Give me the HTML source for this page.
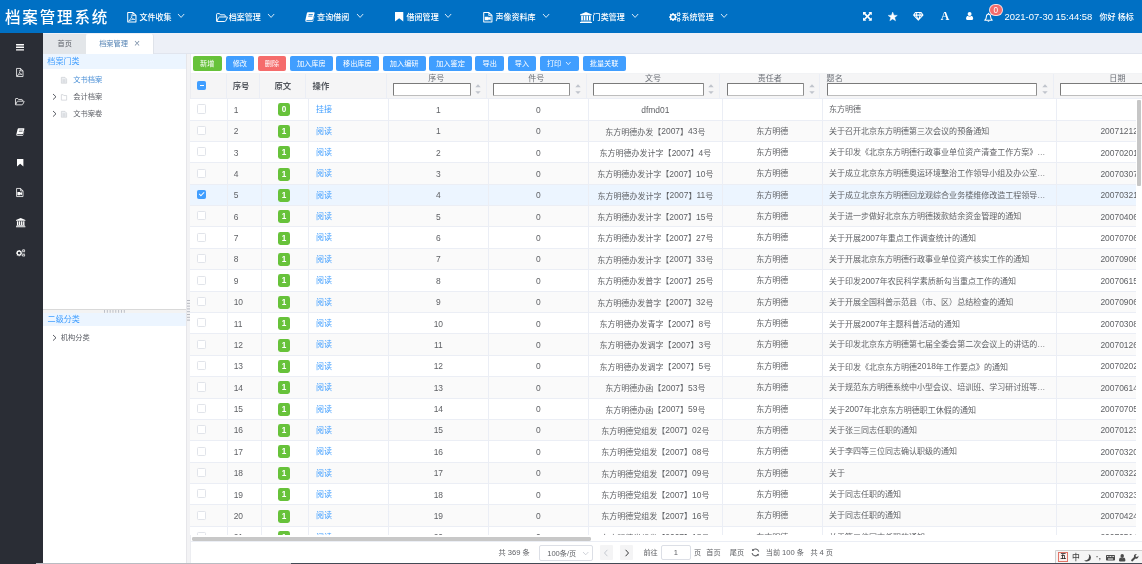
<!DOCTYPE html><html lang="zh-CN"><head><meta charset="utf-8"><title>档案管理系统</title><style>*{box-sizing:border-box;margin:0;padding:0}
html,body{width:1142px;height:564px;overflow:hidden;background:#fff}
body{position:relative;font-family:"Liberation Sans","Noto Sans CJK SC",sans-serif;font-size:8.02px;color:#606266;-webkit-font-smoothing:antialiased}
#w{position:absolute;left:0;top:0;width:1142px;height:564px;will-change:transform}
.a{font-size:1.054em}
.ic{position:absolute;display:block;overflow:visible}
#hdr{position:absolute;left:0;top:0;width:1142px;height:32.8px;background:#0070c4;color:#fff}
#title{position:absolute;left:5px;top:0;height:33px;line-height:35.6px;font-size:15.5px;letter-spacing:1.85px;white-space:nowrap;font-weight:500}
.nt{position:absolute;top:0;height:33px;line-height:35.8px;font-size:8.05px;font-weight:500;white-space:nowrap}
#fontA{position:absolute;left:939.4px;top:9.7px;width:11.4px;text-align:center;font-family:"Liberation Serif",serif;font-weight:700;font-size:11.8px;line-height:13px}
#badge{position:absolute;left:989.2px;top:4.3px;width:13.4px;height:11.3px;border-radius:6px;background:#f56c6c;border:.6px solid rgba(255,255,255,.75);font-size:8.2px;line-height:12px;text-align:center;color:#fff;font-weight:400}
#clock{position:absolute;left:1004.6px;top:0;height:33px;line-height:33.8px;font-size:9.46px;white-space:nowrap}
#hello{position:absolute;left:1099.4px;top:0;height:33px;line-height:36px;font-size:8.05px;font-weight:500;white-space:nowrap}
#side{position:absolute;left:0;top:32.8px;width:43.2px;height:531.2px;background:#2a2d35;color:#fff}
#tabs{position:absolute;left:43.2px;top:32.8px;width:1098.8px;height:20.8px;background:#edf0f7;border-bottom:1px solid #e1e5ee}
.tab{position:absolute;top:1.2px;height:19.6px;line-height:20px;font-size:7.2px;white-space:nowrap}
.t1{left:0;width:42.6px;background:#e3e6e9;color:#5b5e66;padding-left:14.4px}
.t2{left:42.6px;width:68.2px;background:#fff;color:#5583b4;padding-left:13.4px;border-radius:2.4px 2.4px 0 0;border-right:1px solid #dfe3ea}
.t2 .x{position:absolute;left:48.3px;top:-.2px;font-size:10.4px;color:#7f93ab;font-family:"Liberation Sans",sans-serif}
#left{position:absolute;left:43.2px;top:53.6px;width:143px;height:510.4px;background:#fff;overflow:hidden}
.sec{position:absolute;left:0;width:143px;height:14.2px;line-height:15.4px;background:#ecf5ff;color:#409eff;font-size:8.1px;padding-left:4.1px;white-space:nowrap}
.tr{position:absolute;left:0;width:143px;height:16px;line-height:16.4px;font-size:7.25px;color:#5c5f66;white-space:nowrap}
.tr span{position:absolute;top:0}
.tr.bl{color:#4a8fd6}
#hsplit{position:absolute;left:0;top:255.3px;width:143px;height:4.2px;background:#f3f3f3;border-top:1px solid #d9d9d9}
#hsplit i{position:absolute;left:61px;top:.4px;width:20px;height:2.6px;background:repeating-linear-gradient(90deg,#bdbdbd 0,#bdbdbd .8px,transparent .8px,transparent 2.66px)}
#vsplit{position:absolute;left:186px;top:53.6px;width:4.6px;height:510.4px;background:#f3f3f5;border-left:1px solid #e6e6ea;border-right:1px solid #ecedf1}
#vsplit i{position:absolute;left:0;top:246.2px;width:3.2px;height:20px;background:repeating-linear-gradient(180deg,#b4b7be 0,#b4b7be .9px,transparent .9px,transparent 2.66px)}
.btn{position:absolute;top:56px;height:15px;line-height:15.4px;border-radius:2px;background:#409eff;color:#fff;font-size:7.2px;text-align:center;white-space:nowrap}
.btn.g{background:#67c23a}.btn.r{background:#f56c6c}
#thead{position:absolute;left:190.6px;top:72.6px;width:951.4px;height:26.1px;background:#f5f5f6;border-top:1px solid #f2f3f5;border-bottom:1px solid #ebeef5}
.hc{position:absolute;top:0;height:26px;border-left:1px solid #ebeef5}
.hb{position:absolute;top:0;height:24.2px;line-height:25px;font-size:8.35px;font-weight:700;color:#54585f;white-space:nowrap}
.hl{position:absolute;top:.3px;height:10px;line-height:10.6px;font-size:8.05px;color:#6b6f76;white-space:nowrap}
.inp{position:absolute;top:9.5px;height:13.3px;background:#fff;border:1.1px solid;border-color:#7a7a7a #8e8e8e #bdbdbd #7a7a7a;border-radius:1px}
.su,.sd{position:absolute;width:0;height:0;border:2.9px solid transparent}
.su{top:11px;border-bottom:3.1px solid #c0c4cc;border-top-width:0}
.sd{top:17.5px;border-top:3.1px solid #c0c4cc;border-bottom-width:0}
.cb{width:9.1px;height:9.1px;border:1px solid #e1e4ea;border-radius:1.4px;background:#fff;position:relative;margin:0 auto}
.cb.ind,.cb.on{background:#409eff;border-color:#409eff}
.cb.ind{position:absolute;margin:0}
.cb.ind i{position:absolute;left:1.5px;top:2.9px;width:4.1px;height:1.3px;background:#fff}
.cb.on:after{content:"";position:absolute;left:2.3px;top:.4px;width:2.1px;height:4.4px;border:solid #fff;border-width:0 1px 1px 0;transform:rotate(45deg)}
#tbody{position:absolute;left:190.1px;top:98.7px;width:946px;height:436.6px;overflow:hidden}
.row{position:absolute;left:0;width:992px;height:21.4px;border-bottom:1px solid #ebeef5;background:#fff}
.row.s{background:#fafafa}
.row.cur{background:#ecf5ff}
.td{position:absolute;top:0;height:20.4px;line-height:22.6px;border-left:1px solid #ebeef5;text-align:center;font-size:8.02px;color:#606266;white-space:nowrap;overflow:hidden}
.td:first-child,.hc:first-child{border-left-color:transparent}
.td.l{text-align:left;padding-left:5.9px}
.td.lk{color:#409eff;padding-left:6.9px}
.td .a,#pg .a{position:relative;top:-.45px}
.td .cb{position:absolute;left:6.1px;top:5.3px;margin:0}
.el{width:221px;overflow:hidden;text-overflow:ellipsis;white-space:nowrap}
.tag{position:absolute;left:50%;margin-left:-7.5px;top:4.2px;width:12.8px;height:13px;line-height:13.6px;border-radius:2.4px;background:#67c23a;color:#fff;font-size:8.2px;font-weight:700;text-align:center}
#vtrack{position:absolute;left:1136.1px;top:98.7px;width:5.9px;height:436.6px;background:#fff}
#vtrack i{position:absolute;left:.8px;top:1.8px;width:4.6px;height:85.8px;background:#c6c6c6;border-radius:1px}
#htrack{position:absolute;left:190.6px;top:535.3px;width:951.4px;height:6.6px;background:#fff;border-bottom:1px solid #ebeef5}
#htrack i{position:absolute;left:1px;top:1.5px;width:399.4px;height:4.4px;background:#c8c8c8;border-radius:1.4px}
#pg{position:absolute;left:190.6px;top:542.3px;width:951.4px;height:21px;background:#fff;font-size:7.2px;color:#606266}
.pt{position:absolute;top:0;height:20.4px;line-height:22.4px;white-space:nowrap}
.psel{position:absolute;top:3.1px;width:53.4px;height:15.3px;border:1px solid #dcdfe6;border-radius:2px;line-height:15.4px;padding-left:6.9px;white-space:nowrap}
.pbtn{position:absolute;top:2.9px;width:13.4px;height:15.2px;background:#f4f4f5;border-radius:1.2px}
.pinp{position:absolute;top:3.1px;width:29.5px;height:15.1px;border:1px solid #dcdfe6;border-radius:2px;line-height:13.8px;text-align:center}
#ime{position:absolute;left:1054.7px;top:550.2px;width:87.3px;height:12.8px;background:#f5f5f5;border:1px solid #cfcfcf;border-right:0;border-bottom:0;border-radius:1.5px 0 0 0;color:#4a4a4a}
#ime .wu{position:absolute;left:2.7px;top:1.1px;width:9.8px;height:9.8px;border:1.1px solid #e27468;border-top-width:1.8px;background:#fdeeec;color:#222;font-size:6px;line-height:7.8px;text-align:center;font-weight:700}
#ime .zh{position:absolute;left:16.2px;top:1.5px;font-size:7.8px;line-height:10px;font-weight:500;color:#444}
#ime .pun{position:absolute;left:40.4px;top:1.2px;font-size:7.6px;line-height:9px;font-weight:700;color:#555;letter-spacing:.2px}
#bl1{position:absolute;left:36px;top:563px;width:255px;height:1px;background:#b9bcc2}
#bl2{position:absolute;left:291px;top:563px;width:851px;height:1px;background:#434a55}
</style></head><body><div id="w">
<div id="hdr">
<div id="title">档案管理系统</div>
<svg class="ic" style="left:127.10px;top:11.90px;width:9.70px;height:10.50px;color:#fff;" viewBox="0 0 12 14" fill="#fff" preserveAspectRatio="none"><path d="M.9 .7H7.3L11.1 4.5V13.3H.9Z M7.3 .7V4.5H11.1" fill="none" stroke="currentColor" stroke-width="1.25" stroke-linejoin="round"/><path d="M5.2 3.6C6.4 3.4 6.3 5.2 5.6 7C4.8 9 3.6 10.8 2.4 11.7 M5.4 6.6C6.2 8.4 7.6 9.6 9.6 9.9C7.2 9.7 4.6 10.3 2.4 11.6" fill="none" stroke="currentColor" stroke-width="1" stroke-linejoin="round" stroke-linecap="round"/></svg>
<div class="nt" style="left:139.4px">文件收集</div>
<svg class="ic" style="left:177.30px;top:13.40px;width:8.20px;height:5.40px" viewBox="-1 -1 8.2 5.4"><path d="M0 0 L3.1 3.4 L6.2 0" fill="none" stroke="#fff" stroke-width="0.85"/></svg>
<svg class="ic" style="left:215.90px;top:12.50px;width:12.00px;height:9.20px;color:#fff;" viewBox="0 0 16 12" fill="#fff" preserveAspectRatio="none"><path d="M.8 10.6V1.7Q.8 .8 1.7 .8H4.7L5.9 2.4H11.3Q12.2 2.4 12.2 3.3V5" fill="none" stroke="currentColor" stroke-width="1.3" stroke-linejoin="round"/><path d="M1 11.1L3.5 5.9Q3.8 5.2 4.6 5.2H14.6Q15.6 5.2 15.1 6.1L12.9 10.3Q12.5 11.1 11.6 11.1Z" fill="none" stroke="currentColor" stroke-width="1.3" stroke-linejoin="round"/></svg>
<div class="nt" style="left:228.7px">档案管理</div>
<svg class="ic" style="left:266.70px;top:13.40px;width:8.20px;height:5.40px" viewBox="-1 -1 8.2 5.4"><path d="M0 0 L3.1 3.4 L6.2 0" fill="none" stroke="#fff" stroke-width="0.85"/></svg>
<svg class="ic" style="left:304.90px;top:12.00px;width:9.80px;height:9.90px;color:#fff;" viewBox="0 0 14 12" fill="#fff" preserveAspectRatio="none"><path d="M4.3 .3H12.9Q14 .3 13.7 1.4L11.5 8.6Q11.2 9.6 10.2 9.6H2.6Q1.9 9.6 1.8 10.1Q1.7 10.7 2.5 10.7H10.6Q11.4 10.7 11.7 9.9L13.2 5.2L13.6 5.6L11.9 10.8Q11.5 11.8 10.5 11.8H2.2Q.2 11.8 .5 9.9L2.6 1.9Q3 .3 4.3 .3Z M5.4 2.6L5.1 3.5H11L11.3 2.6Z M4.8 4.6L4.5 5.5H10.4L10.7 4.6Z"/></svg>
<div class="nt" style="left:317.1px">查询借阅</div>
<svg class="ic" style="left:355.60px;top:13.40px;width:8.20px;height:5.40px" viewBox="-1 -1 8.2 5.4"><path d="M0 0 L3.1 3.4 L6.2 0" fill="none" stroke="#fff" stroke-width="0.85"/></svg>
<svg class="ic" style="left:394.70px;top:12.40px;width:8.30px;height:9.60px;color:#fff;" viewBox="0 0 8 10" fill="#fff" preserveAspectRatio="none"><path d="M.2 0H7.8Q8 0 8 .3V10L4 6.4L0 10V.3Q0 0 .2 0Z"/></svg>
<div class="nt" style="left:406.5px">借阅管理</div>
<svg class="ic" style="left:444.40px;top:13.40px;width:8.20px;height:5.40px" viewBox="-1 -1 8.2 5.4"><path d="M0 0 L3.1 3.4 L6.2 0" fill="none" stroke="#fff" stroke-width="0.85"/></svg>
<svg class="ic" style="left:483.10px;top:11.90px;width:9.70px;height:10.50px;color:#fff;" viewBox="0 0 12 14" fill="#fff" preserveAspectRatio="none"><path d="M.9 .7H7.3L11.1 4.5V13.3H.9Z M7.3 .7V4.5H11.1" fill="none" stroke="currentColor" stroke-width="1.25" stroke-linejoin="round"/><path d="M2.7 6.3H6.5Q7 6.3 7 6.8V7.8L9.5 6.1V11.3L7 9.6V10.6Q7 11.1 6.5 11.1H2.7Q2.2 11.1 2.2 10.6V6.8Q2.2 6.3 2.7 6.3Z"/></svg>
<div class="nt" style="left:495.4px">声像资料库</div>
<svg class="ic" style="left:541.70px;top:13.40px;width:8.20px;height:5.40px" viewBox="-1 -1 8.2 5.4"><path d="M0 0 L3.1 3.4 L6.2 0" fill="none" stroke="#fff" stroke-width="0.85"/></svg>
<svg class="ic" style="left:580.00px;top:11.50px;width:11.90px;height:11.00px;color:#fff;" viewBox="0 0 16 15" fill="#fff" preserveAspectRatio="none"><path d="M8 0L16 3.3V4.4H0V3.3Z M1.6 5.2H3.9V11.4H1.6Z M5 5.2H7.3V11.4H5Z M8.6 5.2H10.9V11.4H8.6Z M12.1 5.2H14.4V11.4H12.1Z M1 11.9H15V13H1Z M0 13.5H16V15H0Z"/></svg>
<div class="nt" style="left:592.6px">门类管理</div>
<svg class="ic" style="left:630.50px;top:13.40px;width:8.20px;height:5.40px" viewBox="-1 -1 8.2 5.4"><path d="M0 0 L3.1 3.4 L6.2 0" fill="none" stroke="#fff" stroke-width="0.85"/></svg>
<svg class="ic" style="left:668.90px;top:12.20px;width:11.70px;height:9.80px;color:#fff;" viewBox="0 0 17 14" fill="#fff" preserveAspectRatio="none"><path fill-rule="evenodd" d="M11.51 6.30 L11.51 8.30 L10.27 8.37 L9.72 9.70 L10.55 10.64 L9.14 12.05 L8.20 11.22 L6.87 11.77 L6.80 13.01 L4.80 13.01 L4.73 11.77 L3.40 11.22 L2.46 12.05 L1.05 10.64 L1.88 9.70 L1.33 8.37 L0.09 8.30 L0.09 6.30 L1.33 6.23 L1.88 4.90 L1.05 3.96 L2.46 2.55 L3.40 3.38 L4.73 2.83 L4.80 1.59 L6.80 1.59 L6.87 2.83 L8.20 3.38 L9.14 2.55 L10.55 3.96 L9.72 4.90 L10.27 6.23Z M8.30 7.30 A2.5 2.5 0 1 0 3.30 7.30 A2.5 2.5 0 1 0 8.30 7.30Z"/><path fill-rule="evenodd" d="M16.92 2.61 L16.92 3.99 L16.19 4.01 L15.71 4.84 L16.05 5.49 L14.87 6.17 L14.48 5.55 L13.52 5.55 L13.13 6.17 L11.95 5.49 L12.29 4.84 L11.81 4.01 L11.08 3.99 L11.08 2.61 L11.81 2.59 L12.29 1.76 L11.95 1.11 L13.13 0.43 L13.52 1.05 L14.48 1.05 L14.87 0.43 L16.05 1.11 L15.71 1.76 L16.19 2.59Z M15.20 3.30 A1.2 1.2 0 1 0 12.80 3.30 A1.2 1.2 0 1 0 15.20 3.30Z"/><path fill-rule="evenodd" d="M16.92 10.21 L16.92 11.59 L16.19 11.61 L15.71 12.44 L16.05 13.09 L14.87 13.77 L14.48 13.15 L13.52 13.15 L13.13 13.77 L11.95 13.09 L12.29 12.44 L11.81 11.61 L11.08 11.59 L11.08 10.21 L11.81 10.19 L12.29 9.36 L11.95 8.71 L13.13 8.03 L13.52 8.65 L14.48 8.65 L14.87 8.03 L16.05 8.71 L15.71 9.36 L16.19 10.19Z M15.20 10.90 A1.2 1.2 0 1 0 12.80 10.90 A1.2 1.2 0 1 0 15.20 10.90Z"/></svg>
<div class="nt" style="left:681.5px">系统管理</div>
<svg class="ic" style="left:719.50px;top:13.40px;width:8.20px;height:5.40px" viewBox="-1 -1 8.2 5.4"><path d="M0 0 L3.1 3.4 L6.2 0" fill="none" stroke="#fff" stroke-width="0.85"/></svg>
<svg class="ic" style="left:862.90px;top:11.80px;width:8.80px;height:8.80px;color:#fff;" viewBox="0 0 12 12" fill="#fff" preserveAspectRatio="none"><path d="M0 0H4.6L3.1 1.5L6 4.4L8.9 1.5L7.4 0H12V4.6L10.5 3.1L7.6 6L10.5 8.9L12 7.4V12H7.4L8.9 10.5L6 7.6L3.1 10.5L4.6 12H0V7.4L1.5 8.9L4.4 6L1.5 3.1L0 4.6Z"/></svg>
<svg class="ic" style="left:887.70px;top:11.70px;width:9.40px;height:9.00px;color:#fff;" viewBox="0 0 12 11.5" fill="#fff" preserveAspectRatio="none"><polygon points="6.00,0.05 7.56,4.11 11.90,4.33 8.52,7.07 9.64,11.27 6.00,8.90 2.36,11.27 3.48,7.07 0.10,4.33 4.44,4.11" stroke="currentColor" stroke-width=".5" stroke-linejoin="round"/></svg>
<svg class="ic" style="left:913.40px;top:12.20px;width:10.60px;height:8.80px;color:#fff;" viewBox="0 0 16 12" fill="#fff" preserveAspectRatio="none"><path d="M3.6 .8H12.4L15.1 4.3L8 11.2L.9 4.3Z M.9 4.3H15.1 M5.9 .8L4.9 4.3L8 11L11.1 4.3L10.1 .8" fill="none" stroke="currentColor" stroke-width="1.45" stroke-linejoin="round"/></svg>
<div id="fontA">A</div>
<svg class="ic" style="left:965.60px;top:12.40px;width:7.20px;height:8.00px;color:#fff;" viewBox="0 0 10 11" fill="#fff" preserveAspectRatio="none"><circle cx="5" cy="2.9" r="2.75"/><path d="M1.5 5.6Q2.2 5.1 2.9 5.6Q5 7 7.1 5.6Q7.8 5.1 8.5 5.6Q10 6.8 10 9.4Q10 11 8.4 11H1.6Q0 11 0 9.4Q0 6.8 1.5 5.6Z"/></svg>
<svg class="ic" style="left:984.30px;top:12.50px;width:9.00px;height:9.20px;color:#fff;" viewBox="0 0 13 13" fill="#fff" preserveAspectRatio="none"><path d="M6.5 .5V1.4 M6.5 1.5Q9.6 2 9.6 5.4Q9.6 8.7 11.9 10.3H1.1Q3.4 8.7 3.4 5.4Q3.4 2 6.5 1.5Z" fill="none" stroke="currentColor" stroke-width="1.45" stroke-linejoin="round" stroke-linecap="round"/><path d="M5 11.1Q5.2 12.5 6.5 12.5Q7.8 12.5 8 11.1Z"/></svg>
<div id="badge">0</div>
<div id="clock">2021-07-30 15:44:58</div>
<div id="hello">你好 杨标</div>
</div>
<div id="side">
<svg class="ic" style="left:16.00px;top:11.40px;width:8.00px;height:6.60px;color:#fff;" viewBox="0 0 12 10" fill="#fff" preserveAspectRatio="none"><rect x="0" y="0" width="12" height="2.1" rx=".4"/><rect x="0" y="3.95" width="12" height="2.1" rx=".4"/><rect x="0" y="7.9" width="12" height="2.1" rx=".4"/></svg>
<svg class="ic" style="left:16.40px;top:34.90px;width:7.60px;height:9.00px;color:#fff;" viewBox="0 0 12 14" fill="#fff" preserveAspectRatio="none"><path d="M.9 .7H7.3L11.1 4.5V13.3H.9Z M7.3 .7V4.5H11.1" fill="none" stroke="currentColor" stroke-width="1.25" stroke-linejoin="round"/><path d="M5.2 3.6C6.4 3.4 6.3 5.2 5.6 7C4.8 9 3.6 10.8 2.4 11.7 M5.4 6.6C6.2 8.4 7.6 9.6 9.6 9.9C7.2 9.7 4.6 10.3 2.4 11.6" fill="none" stroke="currentColor" stroke-width="1" stroke-linejoin="round" stroke-linecap="round"/></svg>
<svg class="ic" style="left:15.40px;top:65.30px;width:9.60px;height:7.40px;color:#fff;" viewBox="0 0 16 12" fill="#fff" preserveAspectRatio="none"><path d="M.8 10.6V1.7Q.8 .8 1.7 .8H4.7L5.9 2.4H11.3Q12.2 2.4 12.2 3.3V5" fill="none" stroke="currentColor" stroke-width="1.3" stroke-linejoin="round"/><path d="M1 11.1L3.5 5.9Q3.8 5.2 4.6 5.2H14.6Q15.6 5.2 15.1 6.1L12.9 10.3Q12.5 11.1 11.6 11.1Z" fill="none" stroke="currentColor" stroke-width="1.3" stroke-linejoin="round"/></svg>
<svg class="ic" style="left:15.90px;top:95.60px;width:8.60px;height:7.80px;color:#fff;" viewBox="0 0 14 12" fill="#fff" preserveAspectRatio="none"><path d="M4.3 .3H12.9Q14 .3 13.7 1.4L11.5 8.6Q11.2 9.6 10.2 9.6H2.6Q1.9 9.6 1.8 10.1Q1.7 10.7 2.5 10.7H10.6Q11.4 10.7 11.7 9.9L13.2 5.2L13.6 5.6L11.9 10.8Q11.5 11.8 10.5 11.8H2.2Q.2 11.8 .5 9.9L2.6 1.9Q3 .3 4.3 .3Z M5.4 2.6L5.1 3.5H11L11.3 2.6Z M4.8 4.6L4.5 5.5H10.4L10.7 4.6Z"/></svg>
<svg class="ic" style="left:17.00px;top:126.40px;width:6.40px;height:7.60px;color:#fff;" viewBox="0 0 8 10" fill="#fff" preserveAspectRatio="none"><path d="M.2 0H7.8Q8 0 8 .3V10L4 6.4L0 10V.3Q0 0 .2 0Z"/></svg>
<svg class="ic" style="left:16.40px;top:155.20px;width:7.60px;height:9.00px;color:#fff;" viewBox="0 0 12 14" fill="#fff" preserveAspectRatio="none"><path d="M.9 .7H7.3L11.1 4.5V13.3H.9Z M7.3 .7V4.5H11.1" fill="none" stroke="currentColor" stroke-width="1.25" stroke-linejoin="round"/><path d="M2.7 6.3H6.5Q7 6.3 7 6.8V7.8L9.5 6.1V11.3L7 9.6V10.6Q7 11.1 6.5 11.1H2.7Q2.2 11.1 2.2 10.6V6.8Q2.2 6.3 2.7 6.3Z"/></svg>
<svg class="ic" style="left:15.50px;top:185.50px;width:9.40px;height:9.20px;color:#fff;" viewBox="0 0 16 15" fill="#fff" preserveAspectRatio="none"><path d="M8 0L16 3.3V4.4H0V3.3Z M1.6 5.2H3.9V11.4H1.6Z M5 5.2H7.3V11.4H5Z M8.6 5.2H10.9V11.4H8.6Z M12.1 5.2H14.4V11.4H12.1Z M1 11.9H15V13H1Z M0 13.5H16V15H0Z"/></svg>
<svg class="ic" style="left:15.80px;top:215.80px;width:9.20px;height:7.80px;color:#fff;" viewBox="0 0 17 14" fill="#fff" preserveAspectRatio="none"><path fill-rule="evenodd" d="M11.51 6.30 L11.51 8.30 L10.27 8.37 L9.72 9.70 L10.55 10.64 L9.14 12.05 L8.20 11.22 L6.87 11.77 L6.80 13.01 L4.80 13.01 L4.73 11.77 L3.40 11.22 L2.46 12.05 L1.05 10.64 L1.88 9.70 L1.33 8.37 L0.09 8.30 L0.09 6.30 L1.33 6.23 L1.88 4.90 L1.05 3.96 L2.46 2.55 L3.40 3.38 L4.73 2.83 L4.80 1.59 L6.80 1.59 L6.87 2.83 L8.20 3.38 L9.14 2.55 L10.55 3.96 L9.72 4.90 L10.27 6.23Z M8.30 7.30 A2.5 2.5 0 1 0 3.30 7.30 A2.5 2.5 0 1 0 8.30 7.30Z"/><path fill-rule="evenodd" d="M16.92 2.61 L16.92 3.99 L16.19 4.01 L15.71 4.84 L16.05 5.49 L14.87 6.17 L14.48 5.55 L13.52 5.55 L13.13 6.17 L11.95 5.49 L12.29 4.84 L11.81 4.01 L11.08 3.99 L11.08 2.61 L11.81 2.59 L12.29 1.76 L11.95 1.11 L13.13 0.43 L13.52 1.05 L14.48 1.05 L14.87 0.43 L16.05 1.11 L15.71 1.76 L16.19 2.59Z M15.20 3.30 A1.2 1.2 0 1 0 12.80 3.30 A1.2 1.2 0 1 0 15.20 3.30Z"/><path fill-rule="evenodd" d="M16.92 10.21 L16.92 11.59 L16.19 11.61 L15.71 12.44 L16.05 13.09 L14.87 13.77 L14.48 13.15 L13.52 13.15 L13.13 13.77 L11.95 13.09 L12.29 12.44 L11.81 11.61 L11.08 11.59 L11.08 10.21 L11.81 10.19 L12.29 9.36 L11.95 8.71 L13.13 8.03 L13.52 8.65 L14.48 8.65 L14.87 8.03 L16.05 8.71 L15.71 9.36 L16.19 10.19Z M15.20 10.90 A1.2 1.2 0 1 0 12.80 10.90 A1.2 1.2 0 1 0 15.20 10.90Z"/></svg>
</div>
<div id="tabs"><div class="tab t1">首页</div><div class="tab t2">档案管理<span class="x">×</span></div></div>
<div id="left">
<div class="sec" style="top:.8px">档案门类</div>
<div class="tr bl" style="top:18.10px"><svg class="ic" style="left:18.20px;top:5.00px;width:6.00px;height:6.60px;color:#c6c9cf;" viewBox="0 0 10 11" fill="#c6c9cf" preserveAspectRatio="none"><path d="M.6 .6H6.6L9.4 3.4V10.4H.6Z" fill="#eef0f3" stroke="currentColor" stroke-width="1"/><path d="M2.5 4.6H7.5M2.5 6.5H7.5M2.5 8.4H7.5" stroke="currentColor" stroke-width=".9"/></svg><span style="left:30.1px">文书档案</span></div>
<div class="tr" style="top:35.40px"><svg class="ic" style="left:9.30px;top:4.20px;width:5.00px;height:7.60px" viewBox="-1 -1 5.0 7.6"><path d="M0 0 L3.0 2.8 L0 5.6" fill="none" stroke="#4a4d55" stroke-width="0.9"/></svg><svg class="ic" style="left:18.20px;top:5.00px;width:6.00px;height:6.60px;color:#c6c9cf;" viewBox="0 0 10 9" fill="#c6c9cf" preserveAspectRatio="none"><path d="M.6 8.4V.9H3.6L4.6 2.1H9.4V8.4Z" fill="none" stroke="currentColor" stroke-width="1"/></svg><span style="left:30.1px">会计档案</span></div>
<div class="tr" style="top:52.70px"><svg class="ic" style="left:9.30px;top:4.20px;width:5.00px;height:7.60px" viewBox="-1 -1 5.0 7.6"><path d="M0 0 L3.0 2.8 L0 5.6" fill="none" stroke="#4a4d55" stroke-width="0.9"/></svg><svg class="ic" style="left:18.20px;top:5.00px;width:6.00px;height:6.60px;color:#c6c9cf;" viewBox="0 0 10 11" fill="#c6c9cf" preserveAspectRatio="none"><path d="M.6 .6H6.6L9.4 3.4V10.4H.6Z" fill="#eef0f3" stroke="currentColor" stroke-width="1"/><path d="M2.5 4.6H7.5M2.5 6.5H7.5M2.5 8.4H7.5" stroke="currentColor" stroke-width=".9"/></svg><span style="left:30.1px">文书案卷</span></div>
<div id="hsplit"><svg class="ic" style="left:61px;top:.5px;width:21px;height:2.8px" viewBox="0 0 21 2.8" fill="#b9bcc4"><rect x="0.00" y="0" width="0.95" height="2.8"/><rect x="2.83" y="0" width="0.95" height="2.8"/><rect x="5.66" y="0" width="0.95" height="2.8"/><rect x="8.49" y="0" width="0.95" height="2.8"/><rect x="11.32" y="0" width="0.95" height="2.8"/><rect x="14.15" y="0" width="0.95" height="2.8"/><rect x="16.98" y="0" width="0.95" height="2.8"/><rect x="19.81" y="0" width="0.95" height="2.8"/></svg></div>
<div class="sec" style="top:259.5px;height:12.6px;line-height:13.6px"><span style="margin-left:.3px">二级分类</span></div>
<div class="tr" style="top:276.40px"><svg class="ic" style="left:9.20px;top:4.20px;width:5.00px;height:7.60px" viewBox="-1 -1 5.0 7.6"><path d="M0 0 L3.0 2.8 L0 5.6" fill="none" stroke="#4a4d55" stroke-width="0.9"/></svg><span style="left:17.5px">机构分类</span></div>
</div>
<div id="vsplit"><svg class="ic" style="left:0;top:246.3px;width:3.2px;height:21px" viewBox="0 0 3.2 21" fill="#b4b7be"><rect x="0" y="0.00" width="3.2" height="0.95"/><rect x="0" y="2.81" width="3.2" height="0.95"/><rect x="0" y="5.62" width="3.2" height="0.95"/><rect x="0" y="8.43" width="3.2" height="0.95"/><rect x="0" y="11.24" width="3.2" height="0.95"/><rect x="0" y="14.05" width="3.2" height="0.95"/><rect x="0" y="16.86" width="3.2" height="0.95"/><rect x="0" y="19.67" width="3.2" height="0.95"/></svg></div>
<div class="btn g" style="left:192.8px;width:29.0px">新增</div>
<div class="btn " style="left:225.6px;width:28.5px">修改</div>
<div class="btn r" style="left:257.7px;width:28.4px">删除</div>
<div class="btn " style="left:290.0px;width:42.6px">加入库房</div>
<div class="btn " style="left:336.0px;width:42.7px">移出库房</div>
<div class="btn " style="left:382.6px;width:43.2px">加入编研</div>
<div class="btn " style="left:429.1px;width:42.9px">加入鉴定</div>
<div class="btn " style="left:475.3px;width:28.7px">导出</div>
<div class="btn " style="left:507.7px;width:28.7px">导入</div>
<div class="btn" style="left:540.2px;width:38.9px"><span style="position:absolute;left:6.7px">打印</span><svg class="ic" style="left:24.80px;top:5.40px;width:6.60px;height:4.60px" viewBox="-1 -1 6.6 4.6"><path d="M0 0 L2.3 2.6 L4.6 0" fill="none" stroke="#fff" stroke-width="0.8"/></svg></div>
<div class="btn " style="left:582.6px;width:43.0px">批量关联</div>
<div id="thead">
<div class="hc" style="left:-0.5px;width:36.0px"></div>
<div class="hc" style="left:35.5px;width:32.7px"></div>
<div class="hc" style="left:68.2px;width:46.2px"></div>
<div class="hc" style="left:114.4px;width:81.1px"></div>
<div class="hc" style="left:195.5px;width:99.7px"></div>
<div class="hc" style="left:295.2px;width:100.2px"></div>
<div class="hc" style="left:395.4px;width:133.0px"></div>
<div class="hc" style="left:528.4px;width:100.3px"></div>
<div class="hc" style="left:628.7px;width:234.0px"></div>
<div class="hc" style="left:862.7px;width:127.2px"></div>
<div class="cb ind" style="left:6.7px;top:7.2px"><i></i></div>
<div class="hb" style="left:42.1px">序号</div>
<div class="hb" style="left:83.8px">原文</div>
<div class="hb" style="left:122.0px">操作</div>
<div class="hl" style="left:215.7px;width:60px;text-align:center">序号</div><div class="inp" style="left:202.4px;width:78.0px"></div><svg class="ic" style="left:284.7px;top:10.9px;width:6px;height:10.5px" viewBox="0 0 6 10.5"><path d="M0.3 3.2L3 0.3L5.7 3.2Z M0.3 7.2L3 10.1L5.7 7.2Z" fill="#c0c4cc"/></svg>
<div class="hl" style="left:315.7px;width:60px;text-align:center">件号</div><div class="inp" style="left:302.4px;width:77.5px"></div><svg class="ic" style="left:384.4px;top:10.9px;width:6px;height:10.5px" viewBox="0 0 6 10.5"><path d="M0.3 3.2L3 0.3L5.7 3.2Z M0.3 7.2L3 10.1L5.7 7.2Z" fill="#c0c4cc"/></svg>
<div class="hl" style="left:432.5px;width:60px;text-align:center">文号</div><div class="inp" style="left:402.7px;width:110.3px"></div><svg class="ic" style="left:517.6px;top:10.9px;width:6px;height:10.5px" viewBox="0 0 6 10.5"><path d="M0.3 3.2L3 0.3L5.7 3.2Z M0.3 7.2L3 10.1L5.7 7.2Z" fill="#c0c4cc"/></svg>
<div class="hl" style="left:549.2px;width:60px;text-align:center">责任者</div><div class="inp" style="left:536.4px;width:77.0px"></div><svg class="ic" style="left:618.2px;top:10.9px;width:6px;height:10.5px" viewBox="0 0 6 10.5"><path d="M0.3 3.2L3 0.3L5.7 3.2Z M0.3 7.2L3 10.1L5.7 7.2Z" fill="#c0c4cc"/></svg>
<div class="hl" style="left:636.0px">题名</div><div class="inp" style="left:636.2px;width:210.2px"></div><svg class="ic" style="left:851.4px;top:10.9px;width:6px;height:10.5px" viewBox="0 0 6 10.5"><path d="M0.3 3.2L3 0.3L5.7 3.2Z M0.3 7.2L3 10.1L5.7 7.2Z" fill="#c0c4cc"/></svg>
<div class="hl" style="left:896.8px;width:60px;text-align:center">日期</div><div class="inp" style="left:869.5px;width:114.9px"></div>
</div>
<div id="tbody">
<div class="row" style="top:0.50px">
<div class="td c" style="left:0.0px;width:36.7px"><div class="cb"></div></div>
<div class="td l" style="left:36.7px;width:34.3px"><span class="a">1</span></div>
<div class="td c" style="left:71.0px;width:46.9px"><span class="tag">0</span></div>
<div class="td l lk" style="left:117.9px;width:79.8px">挂接</div>
<div class="td c" style="left:197.7px;width:100.1px"><span class="a">1</span></div>
<div class="td c" style="left:297.8px;width:100.1px"><span class="a">0</span></div>
<div class="td c" style="left:397.9px;width:133.7px"><span class="a">dfmd01</span></div>
<div class="td c" style="left:531.6px;width:100.3px"></div>
<div class="td l" style="left:631.9px;width:234.1px"><div class="el">东方明德</div></div>
<div class="td c" style="left:866.0px;width:125.2px"></div>
</div>
<div class="row s" style="top:21.88px">
<div class="td c" style="left:0.0px;width:36.7px"><div class="cb"></div></div>
<div class="td l" style="left:36.7px;width:34.3px"><span class="a">2</span></div>
<div class="td c" style="left:71.0px;width:46.9px"><span class="tag">1</span></div>
<div class="td l lk" style="left:117.9px;width:79.8px">阅读</div>
<div class="td c" style="left:197.7px;width:100.1px"><span class="a">1</span></div>
<div class="td c" style="left:297.8px;width:100.1px"><span class="a">0</span></div>
<div class="td c" style="left:397.9px;width:133.7px">东方明德办发【<span class="a">2007</span>】<span class="a">43</span>号</div>
<div class="td c" style="left:531.6px;width:100.3px">东方明德</div>
<div class="td l" style="left:631.9px;width:234.1px"><div class="el">关于召开北京东方明德第三次会议的预备通知</div></div>
<div class="td c" style="left:866.0px;width:125.2px"><span class="a">20071212</span></div>
</div>
<div class="row" style="top:43.26px">
<div class="td c" style="left:0.0px;width:36.7px"><div class="cb"></div></div>
<div class="td l" style="left:36.7px;width:34.3px"><span class="a">3</span></div>
<div class="td c" style="left:71.0px;width:46.9px"><span class="tag">1</span></div>
<div class="td l lk" style="left:117.9px;width:79.8px">阅读</div>
<div class="td c" style="left:197.7px;width:100.1px"><span class="a">2</span></div>
<div class="td c" style="left:297.8px;width:100.1px"><span class="a">0</span></div>
<div class="td c" style="left:397.9px;width:133.7px">东方明德办发计字【<span class="a">2007</span>】<span class="a">4</span>号</div>
<div class="td c" style="left:531.6px;width:100.3px">东方明德</div>
<div class="td l" style="left:631.9px;width:234.1px"><div class="el">关于印发《北京东方明德行政事业单位资产清查工作方案》的通知</div></div>
<div class="td c" style="left:866.0px;width:125.2px"><span class="a">20070201</span></div>
</div>
<div class="row s" style="top:64.64px">
<div class="td c" style="left:0.0px;width:36.7px"><div class="cb"></div></div>
<div class="td l" style="left:36.7px;width:34.3px"><span class="a">4</span></div>
<div class="td c" style="left:71.0px;width:46.9px"><span class="tag">1</span></div>
<div class="td l lk" style="left:117.9px;width:79.8px">阅读</div>
<div class="td c" style="left:197.7px;width:100.1px"><span class="a">3</span></div>
<div class="td c" style="left:297.8px;width:100.1px"><span class="a">0</span></div>
<div class="td c" style="left:397.9px;width:133.7px">东方明德办发计字【<span class="a">2007</span>】<span class="a">10</span>号</div>
<div class="td c" style="left:531.6px;width:100.3px">东方明德</div>
<div class="td l" style="left:631.9px;width:234.1px"><div class="el">关于成立北京东方明德奥运环境整治工作领导小组及办公室的通知</div></div>
<div class="td c" style="left:866.0px;width:125.2px"><span class="a">20070307</span></div>
</div>
<div class="row cur" style="top:86.02px">
<div class="td c" style="left:0.0px;width:36.7px"><div class="cb on"></div></div>
<div class="td l" style="left:36.7px;width:34.3px"><span class="a">5</span></div>
<div class="td c" style="left:71.0px;width:46.9px"><span class="tag">1</span></div>
<div class="td l lk" style="left:117.9px;width:79.8px">阅读</div>
<div class="td c" style="left:197.7px;width:100.1px"><span class="a">4</span></div>
<div class="td c" style="left:297.8px;width:100.1px"><span class="a">0</span></div>
<div class="td c" style="left:397.9px;width:133.7px">东方明德办发计字【<span class="a">2007</span>】<span class="a">11</span>号</div>
<div class="td c" style="left:531.6px;width:100.3px">东方明德</div>
<div class="td l" style="left:631.9px;width:234.1px"><div class="el">关于成立北京东方明德回龙观综合业务楼维修改造工程领导小组的通知</div></div>
<div class="td c" style="left:866.0px;width:125.2px"><span class="a">20070321</span></div>
</div>
<div class="row s" style="top:107.40px">
<div class="td c" style="left:0.0px;width:36.7px"><div class="cb"></div></div>
<div class="td l" style="left:36.7px;width:34.3px"><span class="a">6</span></div>
<div class="td c" style="left:71.0px;width:46.9px"><span class="tag">1</span></div>
<div class="td l lk" style="left:117.9px;width:79.8px">阅读</div>
<div class="td c" style="left:197.7px;width:100.1px"><span class="a">5</span></div>
<div class="td c" style="left:297.8px;width:100.1px"><span class="a">0</span></div>
<div class="td c" style="left:397.9px;width:133.7px">东方明德办发计字【<span class="a">2007</span>】<span class="a">15</span>号</div>
<div class="td c" style="left:531.6px;width:100.3px">东方明德</div>
<div class="td l" style="left:631.9px;width:234.1px"><div class="el">关于进一步做好北京东方明德拨款结余资金管理的通知</div></div>
<div class="td c" style="left:866.0px;width:125.2px"><span class="a">20070406</span></div>
</div>
<div class="row" style="top:128.78px">
<div class="td c" style="left:0.0px;width:36.7px"><div class="cb"></div></div>
<div class="td l" style="left:36.7px;width:34.3px"><span class="a">7</span></div>
<div class="td c" style="left:71.0px;width:46.9px"><span class="tag">1</span></div>
<div class="td l lk" style="left:117.9px;width:79.8px">阅读</div>
<div class="td c" style="left:197.7px;width:100.1px"><span class="a">6</span></div>
<div class="td c" style="left:297.8px;width:100.1px"><span class="a">0</span></div>
<div class="td c" style="left:397.9px;width:133.7px">东方明德办发计字【<span class="a">2007</span>】<span class="a">27</span>号</div>
<div class="td c" style="left:531.6px;width:100.3px">东方明德</div>
<div class="td l" style="left:631.9px;width:234.1px"><div class="el">关于开展<span class="a">2007</span>年重点工作调查统计的通知</div></div>
<div class="td c" style="left:866.0px;width:125.2px"><span class="a">20070706</span></div>
</div>
<div class="row s" style="top:150.16px">
<div class="td c" style="left:0.0px;width:36.7px"><div class="cb"></div></div>
<div class="td l" style="left:36.7px;width:34.3px"><span class="a">8</span></div>
<div class="td c" style="left:71.0px;width:46.9px"><span class="tag">1</span></div>
<div class="td l lk" style="left:117.9px;width:79.8px">阅读</div>
<div class="td c" style="left:197.7px;width:100.1px"><span class="a">7</span></div>
<div class="td c" style="left:297.8px;width:100.1px"><span class="a">0</span></div>
<div class="td c" style="left:397.9px;width:133.7px">东方明德办发计字【<span class="a">2007</span>】<span class="a">33</span>号</div>
<div class="td c" style="left:531.6px;width:100.3px">东方明德</div>
<div class="td l" style="left:631.9px;width:234.1px"><div class="el">关于开展北京东方明德行政事业单位资产核实工作的通知</div></div>
<div class="td c" style="left:866.0px;width:125.2px"><span class="a">20070906</span></div>
</div>
<div class="row" style="top:171.54px">
<div class="td c" style="left:0.0px;width:36.7px"><div class="cb"></div></div>
<div class="td l" style="left:36.7px;width:34.3px"><span class="a">9</span></div>
<div class="td c" style="left:71.0px;width:46.9px"><span class="tag">1</span></div>
<div class="td l lk" style="left:117.9px;width:79.8px">阅读</div>
<div class="td c" style="left:197.7px;width:100.1px"><span class="a">8</span></div>
<div class="td c" style="left:297.8px;width:100.1px"><span class="a">0</span></div>
<div class="td c" style="left:397.9px;width:133.7px">东方明德办发普字【<span class="a">2007</span>】<span class="a">25</span>号</div>
<div class="td c" style="left:531.6px;width:100.3px">东方明德</div>
<div class="td l" style="left:631.9px;width:234.1px"><div class="el">关于印发<span class="a">2007</span>年农民科学素质新勾当重点工作的通知</div></div>
<div class="td c" style="left:866.0px;width:125.2px"><span class="a">20070615</span></div>
</div>
<div class="row s" style="top:192.92px">
<div class="td c" style="left:0.0px;width:36.7px"><div class="cb"></div></div>
<div class="td l" style="left:36.7px;width:34.3px"><span class="a">10</span></div>
<div class="td c" style="left:71.0px;width:46.9px"><span class="tag">1</span></div>
<div class="td l lk" style="left:117.9px;width:79.8px">阅读</div>
<div class="td c" style="left:197.7px;width:100.1px"><span class="a">9</span></div>
<div class="td c" style="left:297.8px;width:100.1px"><span class="a">0</span></div>
<div class="td c" style="left:397.9px;width:133.7px">东方明德办发普字【<span class="a">2007</span>】<span class="a">32</span>号</div>
<div class="td c" style="left:531.6px;width:100.3px">东方明德</div>
<div class="td l" style="left:631.9px;width:234.1px"><div class="el">关于开展全国科普示范县（市、区）总结检查的通知</div></div>
<div class="td c" style="left:866.0px;width:125.2px"><span class="a">20070906</span></div>
</div>
<div class="row" style="top:214.30px">
<div class="td c" style="left:0.0px;width:36.7px"><div class="cb"></div></div>
<div class="td l" style="left:36.7px;width:34.3px"><span class="a">11</span></div>
<div class="td c" style="left:71.0px;width:46.9px"><span class="tag">1</span></div>
<div class="td l lk" style="left:117.9px;width:79.8px">阅读</div>
<div class="td c" style="left:197.7px;width:100.1px"><span class="a">10</span></div>
<div class="td c" style="left:297.8px;width:100.1px"><span class="a">0</span></div>
<div class="td c" style="left:397.9px;width:133.7px">东方明德办发青字【<span class="a">2007</span>】<span class="a">8</span>号</div>
<div class="td c" style="left:531.6px;width:100.3px">东方明德</div>
<div class="td l" style="left:631.9px;width:234.1px"><div class="el">关于开展<span class="a">2007</span>年主题科普活动的通知</div></div>
<div class="td c" style="left:866.0px;width:125.2px"><span class="a">20070308</span></div>
</div>
<div class="row s" style="top:235.68px">
<div class="td c" style="left:0.0px;width:36.7px"><div class="cb"></div></div>
<div class="td l" style="left:36.7px;width:34.3px"><span class="a">12</span></div>
<div class="td c" style="left:71.0px;width:46.9px"><span class="tag">1</span></div>
<div class="td l lk" style="left:117.9px;width:79.8px">阅读</div>
<div class="td c" style="left:197.7px;width:100.1px"><span class="a">11</span></div>
<div class="td c" style="left:297.8px;width:100.1px"><span class="a">0</span></div>
<div class="td c" style="left:397.9px;width:133.7px">东方明德办发调字【<span class="a">2007</span>】<span class="a">3</span>号</div>
<div class="td c" style="left:531.6px;width:100.3px">东方明德</div>
<div class="td l" style="left:631.9px;width:234.1px"><div class="el">关于印发北京东方明德第七届全委会第二次会议上的讲话的通知</div></div>
<div class="td c" style="left:866.0px;width:125.2px"><span class="a">20070126</span></div>
</div>
<div class="row" style="top:257.06px">
<div class="td c" style="left:0.0px;width:36.7px"><div class="cb"></div></div>
<div class="td l" style="left:36.7px;width:34.3px"><span class="a">13</span></div>
<div class="td c" style="left:71.0px;width:46.9px"><span class="tag">1</span></div>
<div class="td l lk" style="left:117.9px;width:79.8px">阅读</div>
<div class="td c" style="left:197.7px;width:100.1px"><span class="a">12</span></div>
<div class="td c" style="left:297.8px;width:100.1px"><span class="a">0</span></div>
<div class="td c" style="left:397.9px;width:133.7px">东方明德办发调字【<span class="a">2007</span>】<span class="a">5</span>号</div>
<div class="td c" style="left:531.6px;width:100.3px">东方明德</div>
<div class="td l" style="left:631.9px;width:234.1px"><div class="el">关于印发《北京东方明德<span class="a">2018</span>年工作要点》的通知</div></div>
<div class="td c" style="left:866.0px;width:125.2px"><span class="a">20070202</span></div>
</div>
<div class="row s" style="top:278.44px">
<div class="td c" style="left:0.0px;width:36.7px"><div class="cb"></div></div>
<div class="td l" style="left:36.7px;width:34.3px"><span class="a">14</span></div>
<div class="td c" style="left:71.0px;width:46.9px"><span class="tag">1</span></div>
<div class="td l lk" style="left:117.9px;width:79.8px">阅读</div>
<div class="td c" style="left:197.7px;width:100.1px"><span class="a">13</span></div>
<div class="td c" style="left:297.8px;width:100.1px"><span class="a">0</span></div>
<div class="td c" style="left:397.9px;width:133.7px">东方明德办函【<span class="a">2007</span>】<span class="a">53</span>号</div>
<div class="td c" style="left:531.6px;width:100.3px">东方明德</div>
<div class="td l" style="left:631.9px;width:234.1px"><div class="el">关于规范东方明德系统中小型会议、培训班、学习研讨班等有关问题的通知</div></div>
<div class="td c" style="left:866.0px;width:125.2px"><span class="a">20070614</span></div>
</div>
<div class="row" style="top:299.82px">
<div class="td c" style="left:0.0px;width:36.7px"><div class="cb"></div></div>
<div class="td l" style="left:36.7px;width:34.3px"><span class="a">15</span></div>
<div class="td c" style="left:71.0px;width:46.9px"><span class="tag">1</span></div>
<div class="td l lk" style="left:117.9px;width:79.8px">阅读</div>
<div class="td c" style="left:197.7px;width:100.1px"><span class="a">14</span></div>
<div class="td c" style="left:297.8px;width:100.1px"><span class="a">0</span></div>
<div class="td c" style="left:397.9px;width:133.7px">东方明德办函【<span class="a">2007</span>】<span class="a">59</span>号</div>
<div class="td c" style="left:531.6px;width:100.3px">东方明德</div>
<div class="td l" style="left:631.9px;width:234.1px"><div class="el">关于<span class="a">2007</span>年北京东方明德职工休假的通知</div></div>
<div class="td c" style="left:866.0px;width:125.2px"><span class="a">20070705</span></div>
</div>
<div class="row s" style="top:321.20px">
<div class="td c" style="left:0.0px;width:36.7px"><div class="cb"></div></div>
<div class="td l" style="left:36.7px;width:34.3px"><span class="a">16</span></div>
<div class="td c" style="left:71.0px;width:46.9px"><span class="tag">1</span></div>
<div class="td l lk" style="left:117.9px;width:79.8px">阅读</div>
<div class="td c" style="left:197.7px;width:100.1px"><span class="a">15</span></div>
<div class="td c" style="left:297.8px;width:100.1px"><span class="a">0</span></div>
<div class="td c" style="left:397.9px;width:133.7px">东方明德党组发【<span class="a">2007</span>】<span class="a">02</span>号</div>
<div class="td c" style="left:531.6px;width:100.3px">东方明德</div>
<div class="td l" style="left:631.9px;width:234.1px"><div class="el">关于张三同志任职的通知</div></div>
<div class="td c" style="left:866.0px;width:125.2px"><span class="a">20070123</span></div>
</div>
<div class="row" style="top:342.58px">
<div class="td c" style="left:0.0px;width:36.7px"><div class="cb"></div></div>
<div class="td l" style="left:36.7px;width:34.3px"><span class="a">17</span></div>
<div class="td c" style="left:71.0px;width:46.9px"><span class="tag">1</span></div>
<div class="td l lk" style="left:117.9px;width:79.8px">阅读</div>
<div class="td c" style="left:197.7px;width:100.1px"><span class="a">16</span></div>
<div class="td c" style="left:297.8px;width:100.1px"><span class="a">0</span></div>
<div class="td c" style="left:397.9px;width:133.7px">东方明德党组发【<span class="a">2007</span>】<span class="a">08</span>号</div>
<div class="td c" style="left:531.6px;width:100.3px">东方明德</div>
<div class="td l" style="left:631.9px;width:234.1px"><div class="el">关于李四等三位同志确认职级的通知</div></div>
<div class="td c" style="left:866.0px;width:125.2px"><span class="a">20070320</span></div>
</div>
<div class="row s" style="top:363.96px">
<div class="td c" style="left:0.0px;width:36.7px"><div class="cb"></div></div>
<div class="td l" style="left:36.7px;width:34.3px"><span class="a">18</span></div>
<div class="td c" style="left:71.0px;width:46.9px"><span class="tag">1</span></div>
<div class="td l lk" style="left:117.9px;width:79.8px">阅读</div>
<div class="td c" style="left:197.7px;width:100.1px"><span class="a">17</span></div>
<div class="td c" style="left:297.8px;width:100.1px"><span class="a">0</span></div>
<div class="td c" style="left:397.9px;width:133.7px">东方明德党组发【<span class="a">2007</span>】<span class="a">09</span>号</div>
<div class="td c" style="left:531.6px;width:100.3px">东方明德</div>
<div class="td l" style="left:631.9px;width:234.1px"><div class="el">关于</div></div>
<div class="td c" style="left:866.0px;width:125.2px"><span class="a">20070322</span></div>
</div>
<div class="row" style="top:385.34px">
<div class="td c" style="left:0.0px;width:36.7px"><div class="cb"></div></div>
<div class="td l" style="left:36.7px;width:34.3px"><span class="a">19</span></div>
<div class="td c" style="left:71.0px;width:46.9px"><span class="tag">1</span></div>
<div class="td l lk" style="left:117.9px;width:79.8px">阅读</div>
<div class="td c" style="left:197.7px;width:100.1px"><span class="a">18</span></div>
<div class="td c" style="left:297.8px;width:100.1px"><span class="a">0</span></div>
<div class="td c" style="left:397.9px;width:133.7px">东方明德党组发【<span class="a">2007</span>】<span class="a">10</span>号</div>
<div class="td c" style="left:531.6px;width:100.3px">东方明德</div>
<div class="td l" style="left:631.9px;width:234.1px"><div class="el">关于同志任职的通知</div></div>
<div class="td c" style="left:866.0px;width:125.2px"><span class="a">20070323</span></div>
</div>
<div class="row s" style="top:406.72px">
<div class="td c" style="left:0.0px;width:36.7px"><div class="cb"></div></div>
<div class="td l" style="left:36.7px;width:34.3px"><span class="a">20</span></div>
<div class="td c" style="left:71.0px;width:46.9px"><span class="tag">1</span></div>
<div class="td l lk" style="left:117.9px;width:79.8px">阅读</div>
<div class="td c" style="left:197.7px;width:100.1px"><span class="a">19</span></div>
<div class="td c" style="left:297.8px;width:100.1px"><span class="a">0</span></div>
<div class="td c" style="left:397.9px;width:133.7px">东方明德党组发【<span class="a">2007</span>】<span class="a">16</span>号</div>
<div class="td c" style="left:531.6px;width:100.3px">东方明德</div>
<div class="td l" style="left:631.9px;width:234.1px"><div class="el">关于同志任职的通知</div></div>
<div class="td c" style="left:866.0px;width:125.2px"><span class="a">20070424</span></div>
</div>
<div class="row" style="top:428.10px">
<div class="td c" style="left:0.0px;width:36.7px"><div class="cb"></div></div>
<div class="td l" style="left:36.7px;width:34.3px"><span class="a">21</span></div>
<div class="td c" style="left:71.0px;width:46.9px"><span class="tag">1</span></div>
<div class="td l lk" style="left:117.9px;width:79.8px">阅读</div>
<div class="td c" style="left:197.7px;width:100.1px"><span class="a">20</span></div>
<div class="td c" style="left:297.8px;width:100.1px"><span class="a">0</span></div>
<div class="td c" style="left:397.9px;width:133.7px">东方明德党组发【<span class="a">2007</span>】<span class="a">18</span>号</div>
<div class="td c" style="left:531.6px;width:100.3px">东方明德</div>
<div class="td l" style="left:631.9px;width:234.1px"><div class="el">关于等三位同志任职的通知</div></div>
<div class="td c" style="left:866.0px;width:125.2px"><span class="a">20070514</span></div>
</div>
</div>
<div id="vtrack"><i></i></div><div id="htrack"><i></i></div>
<div id="pg">
<span class="pt" style="left:308.0px">共 <span class="a">369</span> 条</span>
<div class="psel" style="left:348.7px"><span><span class="a">100</span>条/页</span><svg class="ic" style="left:41.60px;top:5.00px;width:7.40px;height:4.80px" viewBox="-1 -1 7.4 4.8"><path d="M0 0 L2.7 2.8 L5.4 0" fill="none" stroke="#c0c4cc" stroke-width="0.75"/></svg></div>
<div class="pbtn" style="left:409.0px"><svg class="ic" style="left:3.6px;top:3.6px;width:6px;height:8px" viewBox="0 0 6 8"><path d="M4.4 0.8 L1.5 4 L4.4 7.2" fill="none" stroke="#c0c4cc" stroke-width="0.9"/></svg></div>
<div class="pbtn" style="left:429.4px"><svg class="ic" style="left:3.8px;top:3.6px;width:6px;height:8px" viewBox="0 0 6 8"><path d="M1.6 0.8 L4.5 4 L1.6 7.2" fill="none" stroke="#303133" stroke-width="0.95"/></svg></div>
<span class="pt" style="left:452.8px">前往</span>
<div class="pinp" style="left:470.5px"><span class="a">1</span></div>
<span class="pt" style="left:503.3px">页</span>
<span class="pt" style="left:515.6px">首页</span>
<span class="pt" style="left:539.1px">尾页</span>
<svg class="ic" style="left:560.80px;top:5.90px;width:8.80px;height:8.80px;color:none;" viewBox="0 0 12 12" fill="none" preserveAspectRatio="none"><path d="M10.6 4.9A4.8 4.8 0 0 0 2.1 3.3 M1.4 7.1A4.8 4.8 0 0 0 9.9 8.7" fill="none" stroke="#606266" stroke-width="1.5"/><path d="M1.2 1.1L1.6 4.2L4.6 3.6Z M10.8 10.9L10.4 7.8L7.4 8.4Z" fill="#606266"/></svg>
<span class="pt" style="left:575.1px">当前 <span class="a">100</span> 条</span>
<span class="pt" style="left:619.8px">共 <span class="a">4</span> 页</span>
</div>
<div id="ime"><div class="wu">五</div><div class="zh">中</div>
<svg class="ic" style="left:28.30px;top:2.90px;width:7.00px;height:7.60px;color:#4a4a4a;" viewBox="0 0 10 11" fill="#4a4a4a" preserveAspectRatio="none"><path d="M6.6 0Q8.6 3.4 6.6 6.6Q4.4 9.8 0 9.4Q3 11.6 6.6 10.2Q10 8.6 10 5Q10 2 6.6 0Z"/></svg>
<div class="pun">·,</div>
<svg class="ic" style="left:50.40px;top:4.00px;width:9.00px;height:5.60px;color:#4a4a4a;" viewBox="0 0 14 9" fill="#4a4a4a" preserveAspectRatio="none"><path fill-rule="evenodd" d="M1.2 0H12.8Q14 0 14 1.2V7.8Q14 9 12.8 9H1.2Q0 9 0 7.8V1.2Q0 0 1.2 0Z M1.6 1.8V3.2H3V1.8Z M4 1.8V3.2H5.4V1.8Z M6.4 1.8V3.2H7.8V1.8Z M8.8 1.8V3.2H10.2V1.8Z M11.2 1.8V3.2H12.6V1.8Z M3 5.6V7.2H11V5.6Z"/></svg>
<svg class="ic" style="left:63.10px;top:3.00px;width:6.40px;height:7.60px;color:#4a4a4a;" viewBox="0 0 10 11" fill="#4a4a4a" preserveAspectRatio="none"><circle cx="5" cy="2.9" r="2.75"/><path d="M1.5 5.6Q2.2 5.1 2.9 5.6Q5 7 7.1 5.6Q7.8 5.1 8.5 5.6Q10 6.8 10 9.4Q10 11 8.4 11H1.6Q0 11 0 9.4Q0 6.8 1.5 5.6Z"/></svg>
<svg class="ic" style="left:75.50px;top:3.00px;width:7.60px;height:7.60px;color:#4a4a4a;" viewBox="0 0 12 12" fill="#4a4a4a" preserveAspectRatio="none"><path d="M11.6 2.6L9.6 4.6L7.6 4.2L7.2 2.2L9.2 .2Q7 -.4 5.4 1.2Q4 2.8 4.8 4.9L.5 9.2Q-.3 10.2 .6 11.2Q1.6 12.2 2.7 11.4L7 7.1Q9.2 7.9 10.8 6.4Q12.3 4.8 11.6 2.6Z"/></svg>
</div>
<div id="bl1"></div><div id="bl2"></div>
</div></body></html>
